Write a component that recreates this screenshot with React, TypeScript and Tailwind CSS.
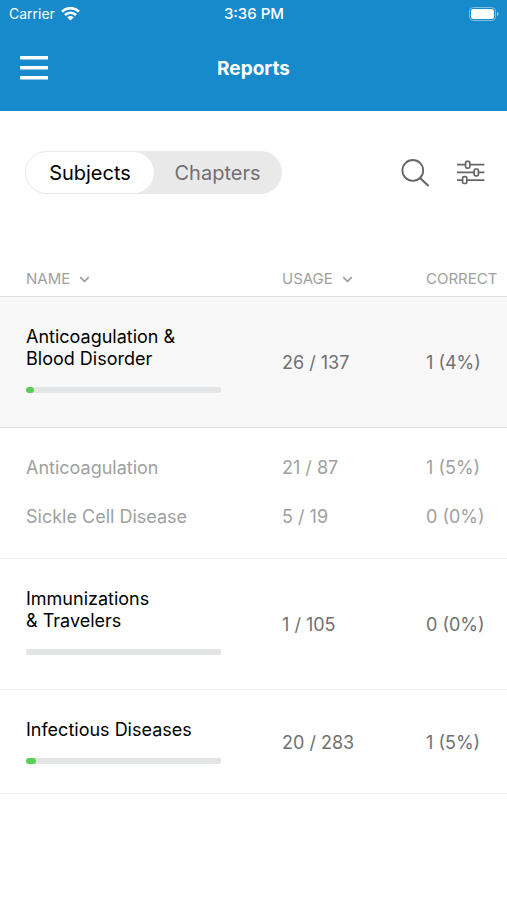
import { useState } from "react";
import { ChevronDown } from "lucide-react";

type Topic = {
  name: string;
  usage: string;
  correct: string;
};

type Subject = Topic & {
  lines: string[];
  progress: number;
  topics?: Topic[];
};

const subjects: Subject[] = [
  {
    name: "Anticoagulation & Blood Disorder",
    lines: ["Anticoagulation &", "Blood Disorder"],
    usage: "26 / 137",
    correct: "1 (4%)",
    progress: 4,
    topics: [
      { name: "Anticoagulation", usage: "21 / 87", correct: "1 (5%)" },
      { name: "Sickle Cell Disease", usage: "5 / 19", correct: "0 (0%)" },
    ],
  },
  {
    name: "Immunizations & Travelers",
    lines: ["Immunizations", "& Travelers"],
    usage: "1 / 105",
    correct: "0 (0%)",
    progress: 0,
  },
  {
    name: "Infectious Diseases",
    lines: ["Infectious Diseases"],
    usage: "20 / 283",
    correct: "1 (5%)",
    progress: 5,
  },
];

function StatusBar() {
  return (
    <div className="grid h-7 grid-cols-3 items-center pl-[9px] pr-2 text-sm">
      <div className="flex items-center gap-[6px]">
        <span>Carrier</span>
        <svg width="19" height="14" viewBox="0 0 19 14" fill="none" stroke="white" strokeWidth="2.6">
          <path d="M1 4.6a12.2 12.2 0 0 1 17 0" />
          <path d="M4 8a7.9 7.9 0 0 1 11 0" />
          <path d="M9.5 13.6 6.2 10.4a4.5 4.5 0 0 1 6.6 0Z" fill="white" stroke="none" />
        </svg>
      </div>
      <span className="text-center text-[15px] font-medium">3:36 PM</span>
      <svg className="justify-self-end" width="30" height="14" viewBox="0 0 30 14" fill="none">
        <rect x="0.5" y="0.5" width="26" height="13" rx="4" stroke="white" strokeOpacity="0.45" />
        <rect x="2" y="2" width="23" height="10" rx="2.5" fill="white" />
        <path d="M28 4.8v4.4c1-.4 1.6-1.2 1.6-2.2S29 5.2 28 4.8Z" fill="white" fillOpacity="0.5" />
      </svg>
    </div>
  );
}

function Header() {
  return (
    <header className="bg-[#168acb] text-white">
      <StatusBar />
      <div className="grid h-[83px] grid-cols-[1fr_auto_1fr] items-center px-5">
        <button aria-label="Menu" className="w-7 pb-1">
          <svg width="28" height="24" viewBox="0 0 28 24" fill="white">
            <rect width="28" height="3.6" rx="0.5" />
            <rect y="10" width="28" height="3.6" rx="0.5" />
            <rect y="20" width="28" height="3.6" rx="0.5" />
          </svg>
        </button>
        <h1 className="text-[19px] font-bold">Reports</h1>
      </div>
    </header>
  );
}

function Progress({ value, label }: { value: number; label: string }) {
  return (
    <div
      role="progressbar"
      aria-label={label}
      aria-valuenow={value}
      className="mt-[17px] mr-[61px] h-[6px] overflow-hidden rounded-[2px] bg-[#e3e4e5]"
    >
      <div className="h-full rounded-full bg-[#55d155]" style={{ width: `${value}%` }} />
    </div>
  );
}

function SubjectRows({ subject }: { subject: Subject }) {
  const open = Boolean(subject.topics);

  return (
    <>
      <tr className={open ? "border-y border-[#dcdcdc] bg-[#f8f8f8]" : "border-y border-[#ececec]"}>
        <td className={subject.lines.length > 1 ? "pt-[29px] pb-[34px] pl-[26px]" : "pt-[29px] pb-[29px] pl-[26px]"}>
          {subject.lines.map((line) => (
            <span key={line} className="block text-black">
              {line}
            </span>
          ))}
          <Progress value={subject.progress} label={subject.name} />
        </td>
        <td className="pt-[2px]">{subject.usage}</td>
        <td className="pt-[2px]">{subject.correct}</td>
      </tr>
      {subject.topics?.map((topic) => (
        <tr key={topic.name} className="text-[#a0a0a0] *:pt-[14px] *:pb-[13px] nth-2:*:pt-[29px] nth-3:*:pb-[30px]">
          <td className="pl-[26px]">{topic.name}</td>
          <td>{topic.usage}</td>
          <td>{topic.correct}</td>
        </tr>
      ))}
    </>
  );
}

export default function App() {
  const [tab, setTab] = useState("Subjects");

  return (
    <div className="min-h-screen bg-white font-['Inter',sans-serif]">
      <Header />

      <main>
        {/* Tabs and tools */}
        <div className="flex items-center justify-between pt-10 pr-[22px] pl-[25px]">
          <div className="flex h-[43px] rounded-full border border-[#e9e9e9] bg-[#e9e9e9] text-xl">
            {["Subjects", "Chapters"].map((name) => (
              <button
                key={name}
                onClick={() => setTab(name)}
                className={
                  tab === name
                    ? "w-32 rounded-full bg-white text-black"
                    : "w-[127px] rounded-full text-[#707070]"
                }
              >
                {name}
              </button>
            ))}
          </div>

          <div className="flex items-center gap-[27px] text-[#666]">
            <button aria-label="Search">
              <svg width="29" height="28" viewBox="0 0 29 28" fill="none" stroke="currentColor" strokeWidth="1.8">
                <circle cx="11.8" cy="11.4" r="10.4" />
                <path d="m19 19 8.6 8" strokeWidth="2" />
              </svg>
            </button>
            <button aria-label="Filters">
              <svg width="28" height="26" viewBox="0 0 28 26" fill="none" stroke="currentColor" strokeWidth="1.7">
                <path d="M0 4.7H8.4M13 4.7h14.4M0 12.4H17M21.6 12.4h5.8M0 20.1H5.4M10 20.1h17.4" />
                <rect x="8.6" y="1.3" width="4.2" height="6.8" rx="1.3" />
                <rect x="17.2" y="9" width="4.2" height="6.8" rx="1.3" />
                <rect x="5.6" y="16.7" width="4.2" height="6.8" rx="1.3" />
              </svg>
            </button>
          </div>
        </div>

        <table className="mt-[73px] w-full table-fixed border-collapse text-left text-lg leading-[22px] text-[#707070]">
          <colgroup>
            <col />
            <col className="w-36" />
            <col className="w-[81px]" />
          </colgroup>
          <thead className="text-[15px] text-[#a0a0a0]">
            <tr>
              <th className="pt-px pb-[6px] pl-[26px] font-normal">
                <button className="flex items-center gap-[7px]">
                  NAME <ChevronDown size={15} strokeWidth={3} />
                </button>
              </th>
              <th className="pt-px pb-[6px] font-normal">
                <button className="flex items-center gap-[7px]">
                  USAGE <ChevronDown size={15} strokeWidth={3} />
                </button>
              </th>
              <th className="pt-px pb-[6px] font-normal">CORRECT</th>
            </tr>
          </thead>
          <tbody>
            {subjects.map((subject) => (
              <SubjectRows key={subject.name} subject={subject} />
            ))}
          </tbody>
        </table>
      </main>
    </div>
  );
}
